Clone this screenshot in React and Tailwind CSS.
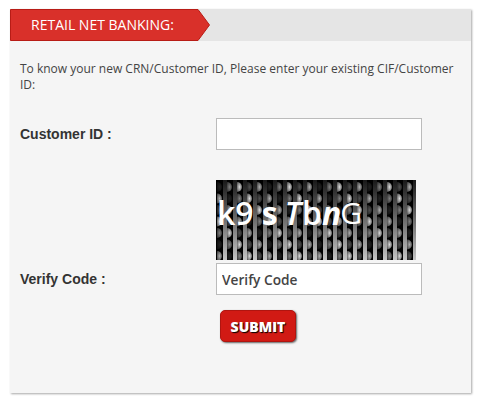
import React from 'react';

const font = "font-['Open_Sans',sans-serif]";

// captcha noise: thin vertical bars with half moons between them
const Noise = () => {
  const cols = [];
  for (let i = 0; i < 20; i++) {
    cols.push(i);
  }
  const rows = [0, 1, 2, 3, 4, 5, 6, 7];
  return (
    <svg width="200" height="80" viewBox="0 0 200 80" className="block">
      <defs>
        <linearGradient id="bar" x1="0" y1="0" x2="0" y2="1">
          <stop offset="0" stopColor="#181818" />
          <stop offset="0.4" stopColor="#5c5c5c" />
          <stop offset="1" stopColor="#c4c4c4" />
        </linearGradient>
        <radialGradient id="moon" cx="0.5" cy="0.5" r="0.8">
          <stop offset="0" stopColor="#e4e4e4" />
          <stop offset="1" stopColor="#2a2a2a" />
        </radialGradient>
      </defs>
      <rect width="200" height="80" fill="#000" />
      {cols.map((c) => (
        <g key={c}>
          {rows.map((r) => (
            <path
              key={r}
              d={`M${c * 10 + 1} ${r * 11.5 + 2}a5 5 0 0 1 0 10z`}
              fill="url(#moon)"
              opacity={0.15 + ((c * 7 + r * 3) % 5) * 0.2}
            />
          ))}
          <rect x={c * 10 + 7} width="4" height="80" fill="url(#bar)" />
        </g>
      ))}
    </svg>
  );
};

const App = () => {
  return (
    <div className={`h-[402px] w-[481px] bg-white pl-[10px] pt-[9px] ${font}`}>
      <div className="h-[384px] w-[461px] bg-[#f5f5f5] shadow-[1px_1px_2px_rgba(0,0,0,0.35)]">
        <div className="h-[32px] bg-[#e5e5e5]">
          <svg width="200" height="32" viewBox="0 0 200 32" className="absolute">
            <path d="M0.5 0.5H188L199.5 16L188 31.5H0.5z" fill="#d9302a" stroke="#b81c16" />
          </svg>
          <div className="relative pl-[21px] text-[14px] leading-[32px] text-white">RETAIL NET BANKING:</div>
        </div>

        <p className="mt-[20px] px-[10px] text-[12px] leading-[16px] text-[#444]">
          To know your new CRN/Customer ID, Please enter your existing CIF/Customer ID:
        </p>

        <div className="mt-[25px] flex items-center">
          <label className="w-[206px] pl-[10px] font-['Liberation_Sans',sans-serif] text-[14px] font-bold text-[#333]">Customer ID :</label>
          <input className="h-[32px] w-[206px] border border-[#bbb] bg-white" />
        </div>

        <div className="relative ml-[206px] mt-[30px] h-[80px] w-[200px]">
          <Noise />
          <div className="absolute left-[1px] top-[9px] flex h-[48px] items-center text-[32px] font-semibold leading-none text-white">
            <span>k9</span>
            <span className="ml-[8px] font-bold">s</span>
            <span className="ml-[7px] italic">T</span>
            <span className="ml-[1px]">b</span>
            <span className="font-bold italic">n</span>
            <span className="ml-[-1px] text-[30px] font-medium">G</span>
          </div>
        </div>

        <div className="mt-[3px] flex items-center">
          <label className="w-[206px] pl-[10px] font-['Liberation_Sans',sans-serif] text-[14px] font-bold text-[#333]">Verify Code :</label>
          <input
            defaultValue="Verify Code"
            className="h-[32px] w-[206px] border border-[#bbb] bg-white px-[5px] text-[13.7px] font-semibold text-[#444] outline-none"
          />
        </div>

        <div className="ml-[210px] mt-[15px]">
          <button className="h-[32px] w-[76px] rounded-[5px] border border-[#b01510] bg-[#d11a14] text-[14px] font-extrabold text-white shadow-[1px_1px_2px_rgba(0,0,0,0.6)] [text-shadow:1px_1px_1px_#000]">
            SUBMIT
          </button>
        </div>
      </div>
    </div>
  );
};

export default App;
